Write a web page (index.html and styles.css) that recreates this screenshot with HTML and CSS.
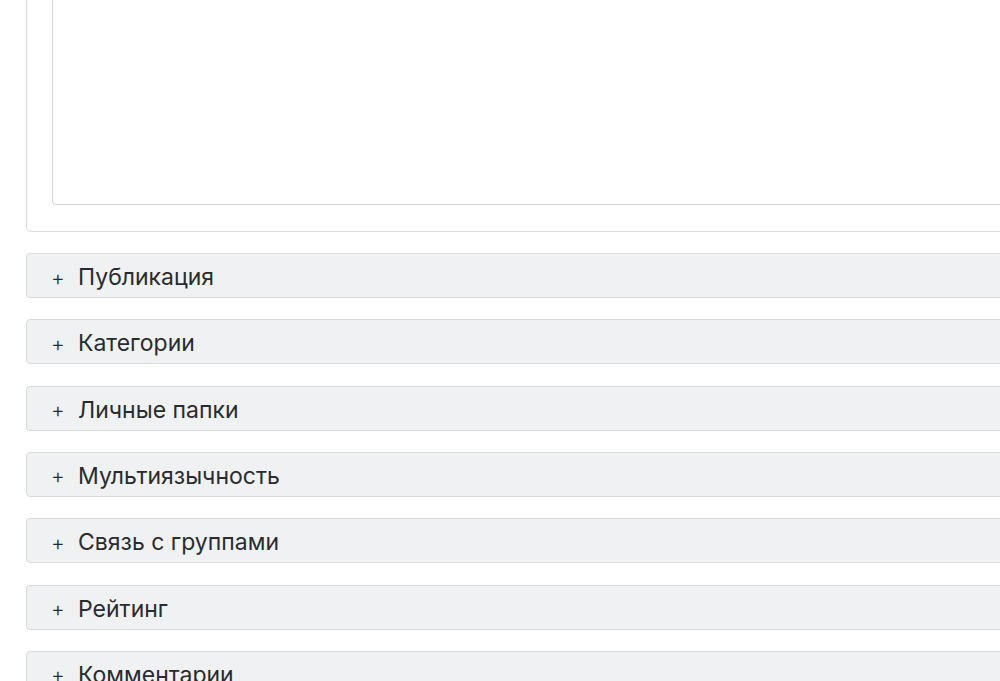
FILE: index.html
```html
<!DOCTYPE html>
<html lang="ru">
<head>
<meta charset="utf-8">
<title>Редактор</title>
<link rel="stylesheet" href="styles.css">
</head>
<body>
<div class="page">
  <div class="card">
    <div class="editor"></div>
  </div>
  <div class="panels">
    <div class="panel"><span class="plus">+</span><span class="label">Публикация</span></div>
    <div class="panel"><span class="plus">+</span><span class="label">Категории</span></div>
    <div class="panel"><span class="plus">+</span><span class="label">Личные папки</span></div>
    <div class="panel"><span class="plus">+</span><span class="label">Мультиязычность</span></div>
    <div class="panel"><span class="plus">+</span><span class="label">Связь с группами</span></div>
    <div class="panel"><span class="plus">+</span><span class="label">Рейтинг</span></div>
    <div class="panel"><span class="plus">+</span><span class="label">Комментарии</span></div>
  </div>
</div>
</body>
</html>
```
FILE: styles.css
```css
html, body {
  margin: 0;
  padding: 0;
  background: #fff;
  overflow: hidden;
  height: 681px;
}
.page {
  width: 1100px;
  padding-left: 26px;
  font-family: Inter, "Liberation Sans", Arial, sans-serif;
  color: #2a2b2d;
}
.card {
  margin-top: -30px;
  border: 1px solid #dcdddf;
  border-radius: 5px;
  padding: 25px 25px 26px;
  background: #fff;
}
.editor {
  height: 207px;
  border: 1px solid #d3d5d7;
  border-radius: 4px;
  background: #fff;
}
.panels {
  margin-top: 21px;
  display: flex;
  flex-direction: column;
  gap: 21.33px;
}
.panel {
  box-sizing: border-box;
  height: 45px;
  border: 1px solid #d8dadc;
  border-radius: 4px;
  background: #f0f1f3;
  display: flex;
  align-items: center;
  padding-left: 24px;
  padding-top: 3px;
}
.plus {
  font-size: 21px;
  font-weight: 300;
  width: 27px;
  position: relative;
  top: 0;
}
.label {
  font-size: 23px;
}
```
